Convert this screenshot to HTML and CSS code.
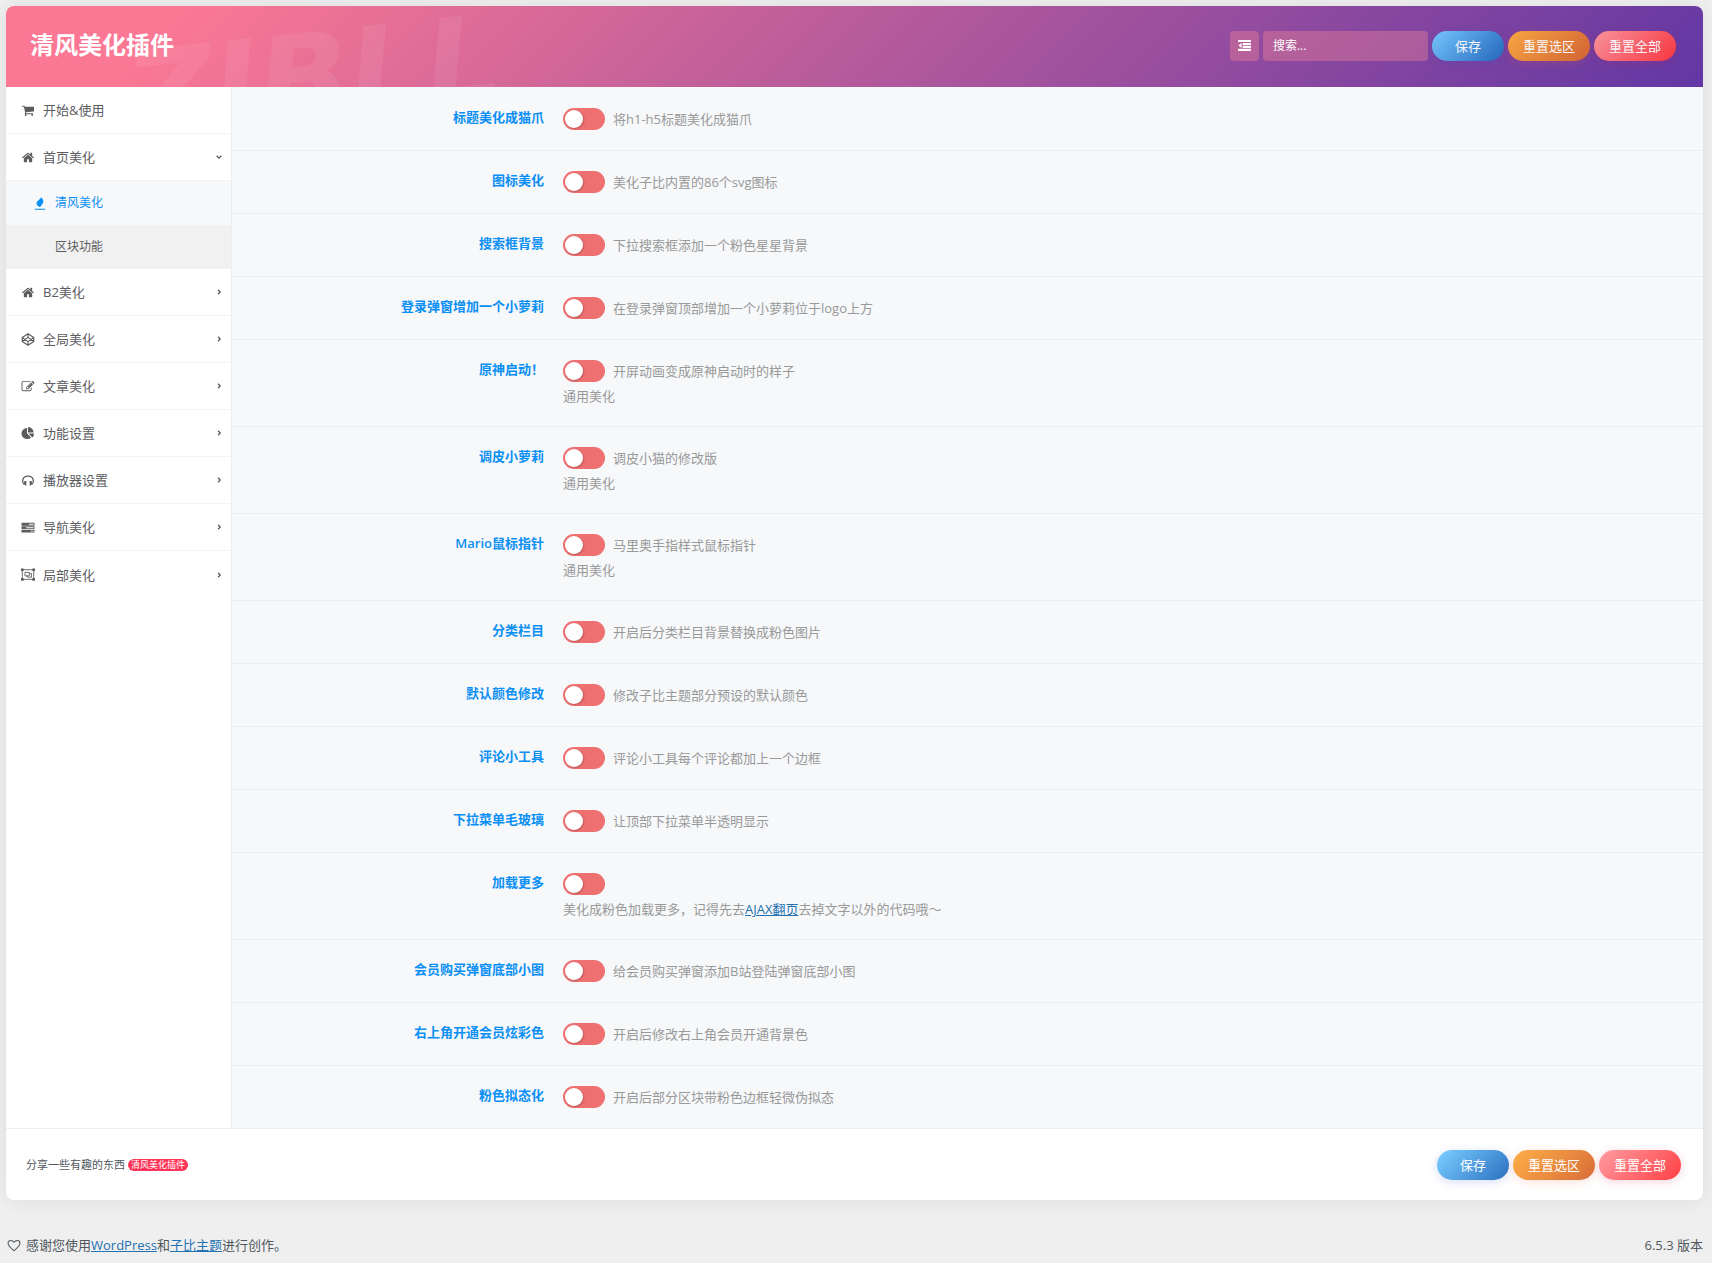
FILE: index.html
```html
<!DOCTYPE html>
<html lang="zh-CN">
<head>
<meta charset="utf-8">
<title>清风美化插件</title>
<link rel="stylesheet" href="styles.css">
</head>
<body>
<svg class="sprite" aria-hidden="true">
  <symbol id="i-cart" viewBox="0 0 1792 1792"><path d="M704 1536q0 52-38 90t-90 38-90-38-38-90 38-90 90-38 90 38 38 90zm896 0q0 52-38 90t-90 38-90-38-38-90 38-90 90-38 90 38 38 90zm128-1088v512q0 24-16.500 42.500t-40.500 21.500l-1044 122q13 60 13 70 0 16-24 64h920q26 0 45 19t19 45-19 45-45 19h-1024q-26 0-45-19t-19-45q0-11 8-31.500t16-36 21.500-40 15.500-29.500l-177-823h-204q-26 0-45-19t-19-45 19-45 45-19h256q16 0 28.500 6.500t19.500 15.500 13 24.500 8 26 5.500 29.500 4.500 26h1201q26 0 45 19t19 45z"/></symbol>
  <symbol id="i-home" viewBox="0 0 1792 1792"><path d="M1472 992v480q0 26-19 45t-45 19h-384v-384h-256v384h-384q-26 0-45-19t-19-45v-480q0-1 .5-3t.5-3l575-474 575 474q1 2 1 6zm223-69l-62 74q-8 9-21 11h-3q-13 0-21-7l-692-577-692 577q-12 8-24 7-13-2-21-11l-62-74q-8-10-7-23.500t11-21.500l719-599q32-26 76-26t76 26l244 204v-195q0-14 9-23t23-9h192q14 0 23 9t9 23v408l219 182q10 8 11 21.500t-7 23.500z"/></symbol>
  <symbol id="i-pen" viewBox="0 0 1792 1792"><path d="M888 1184l116-116-152-152-116 116v56h96v96h56zm440-720q-16-16-33 1l-350 350q-17 17-1 33t33-1l350-350q17-17 1-33zm80 594v190q0 119-84.500 203.500t-203.500 84.500h-832q-119 0-203.500-84.500t-84.500-203.500v-832q0-119 84.500-203.500t203.500-84.500h832q63 0 117 25 15 7 18 23 3 17-9 29l-49 49q-14 14-32 8-23-6-45-6h-832q-66 0-113 47t-47 113v832q0 66 47 113t113 47h832q66 0 113-47t47-113v-126q0-13 9-22l64-64q15-15 35-7t20 29zm-96-738l288 288-672 672h-288v-288zm444 132l-92 92-288-288 92-92q28-28 68-28t68 28l152 152q28 28 28 68t-28 68z"/></symbol>
  <symbol id="i-pie" viewBox="0 0 1792 1792"><path d="M768 890l546 546q-106 108-247.500 168t-298.500 60q-209 0-385.500-103t-279.500-279.500-103-385.500 103-385.500 279.500-279.500 385.500-103v762zm187 6h773q0 157-60 298.500t-168 247.500zm709-128h-768v-768q209 0 385.500 103t279.500 279.500 103 385.500z"/></symbol>
  <symbol id="i-codepen" viewBox="0 0 14 14"><path fill="none" stroke="currentColor" stroke-width="1.200" stroke-linejoin="round" d="M7 .8l6.200 4.100v4.200L7 13.200.8 9.100V4.900zM7 .8v3.900M7 9.300v3.900M.8 4.900L7 9.300l6.200-4.400M.8 9.100L7 4.700l6.200 4.400"/></symbol>
  <symbol id="i-phones" viewBox="0 0 14 14"><path fill="none" stroke="currentColor" stroke-width="1.400" d="M2.600 11.200C.2 8.600.6 2.200 7 2.200s6.800 6.400 4.400 9"/><path d="M3.200 7.600h2v4.800h-1.200l-1.600-1.800zM10.800 7.600h-2v4.800h1.200l1.600-1.800z"/></symbol>
  <symbol id="i-server" viewBox="0 0 14 14"><path fill-rule="evenodd" d="M0 2h14v3H0zM0 5.700h14v3H0zM0 9.400h14v3H0zM8 3h5v1H8zM5 6.700h8v1H5zM10 10.400h3v1h-3z"/></symbol>
  <symbol id="i-group" viewBox="0 0 16 14"><g fill="none" stroke="currentColor"><path d="M1.500 1.500h13v11h-13zM4.500 4.500h5v4h-5zM9.500 6h2.500v4H7V8.500"/></g><path d="M0 0h3v3H0zM13 0h3v3h-3zM0 11h3v3H0zM13 11h3v3h-3z"/></symbol>
  <symbol id="i-flame" viewBox="0 0 12 14"><path d="M7.200.4c.2 1.300 2.400 1.800 2.400 4.200 0 2.300-1.500 3-2.200 4.600-.4.900-.8 1.300-1.900 1.500C3.600 9.800 2.300 8.600 2.300 6.900c0-2.100 1.700-2.700 2.700-4C5.900 1.900 6.700 1.400 7.200.4zM.4 12.600h11.200v1H.4z"/></symbol>
  <symbol id="i-outdent" viewBox="0 0 14 12"><path d="M0 0h14v2.200H0zM5 3.200h9v2.200H5zM5 6.400h9v2.200H5zM0 9.600h14V12H0zM3.800 3v5.800L.4 5.900z"/></symbol>
  <symbol id="i-right" viewBox="0 0 6 8"><path fill="none" stroke="currentColor" stroke-width="1.300" d="M2 1.800L4.200 4 2 6.200"/></symbol>
  <symbol id="i-down" viewBox="0 0 6 8"><path fill="none" stroke="currentColor" stroke-width="1.300" d="M.6 2.800L3 5.200l2.400-2.400"/></symbol>
  <symbol id="i-heart" viewBox="0 0 14 14"><path fill="none" stroke="currentColor" stroke-width="1.100" stroke-linejoin="round" d="M7 12.600C4.600 10.500.6 7.400.6 4.500.6 2.700 1.900 1.500 3.500 1.500S6.300 2.400 7 3.500c.7-1.100 1.900-2 3.500-2s2.900 1.200 2.900 3c0 2.900-4 6-6.400 8.100z"/></symbol>
</svg>

<form class="card">
  <header class="header">
    <span class="mark" aria-hidden="true">ZIBLL</span>
    <h1 class="title">清风美化插件</h1>
    <div class="tools">
      <button type="button" class="expand" aria-label="展开全部"><svg class="outdent"><use href="#i-outdent"/></svg></button>
      <input class="search" type="text" placeholder="搜索..." aria-label="搜索">
      <button type="button" class="btn save">保存</button>
      <button type="button" class="btn section">重置选区</button>
      <button type="button" class="btn all">重置全部</button>
    </div>
  </header>

  <div class="main">
    <nav class="nav">
      <a class="item" href="#start"><svg class="icon"><use href="#i-cart"/></svg><span class="name">开始&amp;使用</span></a>
      <a class="item" href="#home"><svg class="icon"><use href="#i-home"/></svg><span class="name">首页美化</span><svg class="arrow"><use href="#i-down"/></svg></a>
      <a class="sub active" href="#qf"><svg class="icon"><use href="#i-flame"/></svg><span>清风美化</span></a>
      <a class="sub" href="#block"><span class="icon"></span><span>区块功能</span></a>
      <a class="item" href="#b2"><svg class="icon"><use href="#i-home"/></svg><span class="name">B2美化</span><svg class="arrow"><use href="#i-right"/></svg></a>
      <a class="item" href="#global"><svg class="icon"><use href="#i-codepen"/></svg><span class="name">全局美化</span><svg class="arrow"><use href="#i-right"/></svg></a>
      <a class="item" href="#post"><svg class="icon"><use href="#i-pen"/></svg><span class="name">文章美化</span><svg class="arrow"><use href="#i-right"/></svg></a>
      <a class="item" href="#function"><svg class="icon"><use href="#i-pie"/></svg><span class="name">功能设置</span><svg class="arrow"><use href="#i-right"/></svg></a>
      <a class="item" href="#player"><svg class="icon"><use href="#i-phones"/></svg><span class="name">播放器设置</span><svg class="arrow"><use href="#i-right"/></svg></a>
      <a class="item" href="#navigation"><svg class="icon"><use href="#i-server"/></svg><span class="name">导航美化</span><svg class="arrow"><use href="#i-right"/></svg></a>
      <a class="item" href="#part"><svg class="icon"><use href="#i-group"/></svg><span class="name">局部美化</span><svg class="arrow"><use href="#i-right"/></svg></a>
    </nav>

    <div class="fields">
      <div class="row"><label class="label" for="f1">标题美化成猫爪</label><div class="value"><div class="line"><input class="switch" type="checkbox" id="f1"><span>将h1-h5标题美化成猫爪</span></div></div></div>
      <div class="row"><label class="label" for="f2">图标美化</label><div class="value"><div class="line"><input class="switch" type="checkbox" id="f2"><span>美化子比内置的86个svg图标</span></div></div></div>
      <div class="row"><label class="label" for="f3">搜索框背景</label><div class="value"><div class="line"><input class="switch" type="checkbox" id="f3"><span>下拉搜索框添加一个粉色星星背景</span></div></div></div>
      <div class="row"><label class="label" for="f4">登录弹窗增加一个小萝莉</label><div class="value"><div class="line"><input class="switch" type="checkbox" id="f4"><span>在登录弹窗顶部增加一个小萝莉位于logo上方</span></div></div></div>
      <div class="row"><label class="label" for="f5">原神启动！</label><div class="value"><div class="line"><input class="switch" type="checkbox" id="f5"><span>开屏动画变成原神启动时的样子</span></div><p class="note">通用美化</p></div></div>
      <div class="row"><label class="label" for="f6">调皮小萝莉</label><div class="value"><div class="line"><input class="switch" type="checkbox" id="f6"><span>调皮小猫的修改版</span></div><p class="note">通用美化</p></div></div>
      <div class="row"><label class="label" for="f7">Mario鼠标指针</label><div class="value"><div class="line"><input class="switch" type="checkbox" id="f7"><span>马里奥手指样式鼠标指针</span></div><p class="note">通用美化</p></div></div>
      <div class="row"><label class="label" for="f8">分类栏目</label><div class="value"><div class="line"><input class="switch" type="checkbox" id="f8"><span>开启后分类栏目背景替换成粉色图片</span></div></div></div>
      <div class="row"><label class="label" for="f9">默认颜色修改</label><div class="value"><div class="line"><input class="switch" type="checkbox" id="f9"><span>修改子比主题部分预设的默认颜色</span></div></div></div>
      <div class="row"><label class="label" for="f10">评论小工具</label><div class="value"><div class="line"><input class="switch" type="checkbox" id="f10"><span>评论小工具每个评论都加上一个边框</span></div></div></div>
      <div class="row"><label class="label" for="f11">下拉菜单毛玻璃</label><div class="value"><div class="line"><input class="switch" type="checkbox" id="f11"><span>让顶部下拉菜单半透明显示</span></div></div></div>
      <div class="row"><label class="label" for="f12">加载更多</label><div class="value"><div class="line"><input class="switch" type="checkbox" id="f12"></div><p class="note">美化成粉色加载更多，记得先去<a class="link" href="#ajax">AJAX翻页</a>去掉文字以外的代码哦～</p></div></div>
      <div class="row"><label class="label" for="f13">会员购买弹窗底部小图</label><div class="value"><div class="line"><input class="switch" type="checkbox" id="f13"><span>给会员购买弹窗添加B站登陆弹窗底部小图</span></div></div></div>
      <div class="row"><label class="label" for="f14">右上角开通会员炫彩色</label><div class="value"><div class="line"><input class="switch" type="checkbox" id="f14"><span>开启后修改右上角会员开通背景色</span></div></div></div>
      <div class="row"><label class="label" for="f15">粉色拟态化</label><div class="value"><div class="line"><input class="switch" type="checkbox" id="f15"><span>开启后部分区块带粉色边框轻微伪拟态</span></div></div></div>
    </div>
  </div>

  <footer class="bottom">
    <p class="share">分享一些有趣的东西 <span class="badge">清风美化插件</span></p>
    <div class="tools">
      <button type="button" class="btn save">保存</button>
      <button type="button" class="btn section">重置选区</button>
      <button type="button" class="btn all">重置全部</button>
    </div>
  </footer>
</form>

<footer class="credits">
  <p class="thanks"><svg class="heart"><use href="#i-heart"/></svg><span>感谢您使用<a class="link" href="#wordpress">WordPress</a>和<a class="link" href="#zibll">子比主题</a>进行创作。</span></p>
  <p>6.5.3 版本</p>
</footer>
</body>
</html>
```
FILE: styles.css
```css
* {
  box-sizing: border-box;
}

body {
  margin: 0;
  padding: 6px 9px 6px 6px;
  background: #efefef;
  color: #50575e;
  font: 13px/20px "Open Sans", "Noto Sans CJK SC", sans-serif;
}

p,
h1 {
  margin: 0;
}

button,
input {
  font: inherit;
  margin: 0;
}

.sprite {
  display: none;
}

svg {
  fill: currentColor;
  flex: none;
}

.card {
  border-radius: 8px;
  overflow: hidden;
  background: #fff;
  box-shadow: 0 0 20px rgba(0, 0, 0, 0.08);
}

.header {
  position: relative;
  display: flex;
  align-items: center;
  justify-content: space-between;
  height: 81px;
  padding: 0 27px 2px 24px;
  overflow: hidden;
  background: linear-gradient(135deg, #fb7894 10%, #6237a4 100%);
}

.mark {
  position: absolute;
  left: 120px;
  top: 12px;
  color: rgba(255, 255, 255, 0.07);
  font: italic bold 120px/120px "DejaVu Sans", sans-serif;
  transform: rotate(-6deg);
}

.title {
  position: relative;
  padding-bottom: 2px;
  color: #fff;
  font-size: 24px;
  line-height: 30px;
  font-weight: 700;
}

.tools {
  position: relative;
  display: flex;
  gap: 4px;
}

.expand {
  display: flex;
  align-items: center;
  justify-content: center;
  width: 29px;
  height: 30px;
  padding: 0;
  border: 0;
  border-radius: 4px;
  background: rgba(255, 140, 148, 0.35);
  color: #fff;
}

.outdent {
  width: 13px;
  height: 11px;
}

.search {
  width: 165px;
  height: 30px;
  padding: 0 10px;
  border: 0;
  border-radius: 4px;
  background: rgba(255, 140, 148, 0.35);
  color: #fff;
  font-size: 12px;
}

.search::placeholder {
  color: #fff;
  opacity: 1;
}

.btn {
  height: 30px;
  padding: 0 15px;
  border: 0;
  border-radius: 15px;
  color: #fff;
  line-height: 30px;
  opacity: 0.95;
}

.save {
  padding: 0 23px;
  background: linear-gradient(135deg, #6dc3fb 10%, #2069bd 100%);
  box-shadow: 0 2px 10px rgba(50, 80, 200, 0.2);
}

.section {
  background: linear-gradient(135deg, #faa43c 10%, #d7652f 100%);
  box-shadow: 0 2px 10px rgba(240, 100, 50, 0.2);
}

.all {
  background: linear-gradient(135deg, #ff8e93 10%, #ff3f44 90%);
  box-shadow: 0 2px 10px rgba(200, 40, 80, 0.2);
}

.main {
  display: flex;
}

.nav {
  flex: none;
  width: 226px;
  border-right: 1px solid #eee;
}

.item,
.sub {
  display: flex;
  align-items: center;
  color: #5c5c5f;
  text-decoration: none;
}

.item {
  height: 47px;
  gap: 8px;
  padding: 0 9px 0 15px;
  border-bottom: 1px solid #f2f4f4;
}

.item:last-child {
  border-bottom: 0;
}

.icon {
  width: 14px;
  height: 13px;
}

.name {
  flex: 1;
}

.arrow {
  width: 6px;
  height: 8px;
}

.sub {
  height: 44px;
  gap: 8px;
  padding-left: 27px;
  background: #f1f1f1;
  font-size: 12px;
}

.active {
  background: #f6f8fa;
  color: #0a8ff5;
}

.fields {
  flex: 1;
  min-width: 0;
  padding-top: 1px;
  background: #f6f8fa;
  color: #999;
}

.row {
  display: grid;
  grid-template-columns: 312px 1fr;
  column-gap: 19px;
  padding: 20px 0;
  border-bottom: 1px solid #ebedef;
}

.row:last-child {
  border-bottom: 0;
}

.label {
  color: #0a8ff5;
  font-weight: 600;
  line-height: 18px;
  text-align: right;
}

.line {
  display: flex;
  align-items: center;
  gap: 8px;
  height: 22px;
}

.note {
  padding-top: 4px;
}

.switch {
  appearance: none;
  flex: none;
  display: flex;
  align-items: center;
  width: 42px;
  height: 22px;
  padding: 0 2px;
  border-radius: 11px;
  background: #ee7071;
}

.switch::before {
  content: "";
  width: 18px;
  height: 18px;
  border-radius: 50%;
  background: #fff;
  box-shadow: 1px 1px 2px rgba(0, 0, 0, 0.2);
}

.switch:checked {
  justify-content: flex-end;
  background: #3fbf7f;
}

.link {
  color: #2271b1;
}

.bottom {
  display: flex;
  align-items: center;
  justify-content: space-between;
  height: 72px;
  padding: 0 22px 0 20px;
  border-top: 1px solid #eee;
}

.share {
  display: flex;
  align-items: center;
  gap: 3px;
  font-size: 11px;
}

.badge {
  padding: 0 3px;
  border-radius: 6px;
  background: #ff3355;
  color: #fff;
  font-size: 9px;
  line-height: 12px;
}

.credits {
  display: flex;
  justify-content: space-between;
  padding-top: 35px;
}

.thanks {
  display: flex;
  align-items: center;
  gap: 4px;
}

.heart {
  width: 16px;
  height: 13px;
}
```
